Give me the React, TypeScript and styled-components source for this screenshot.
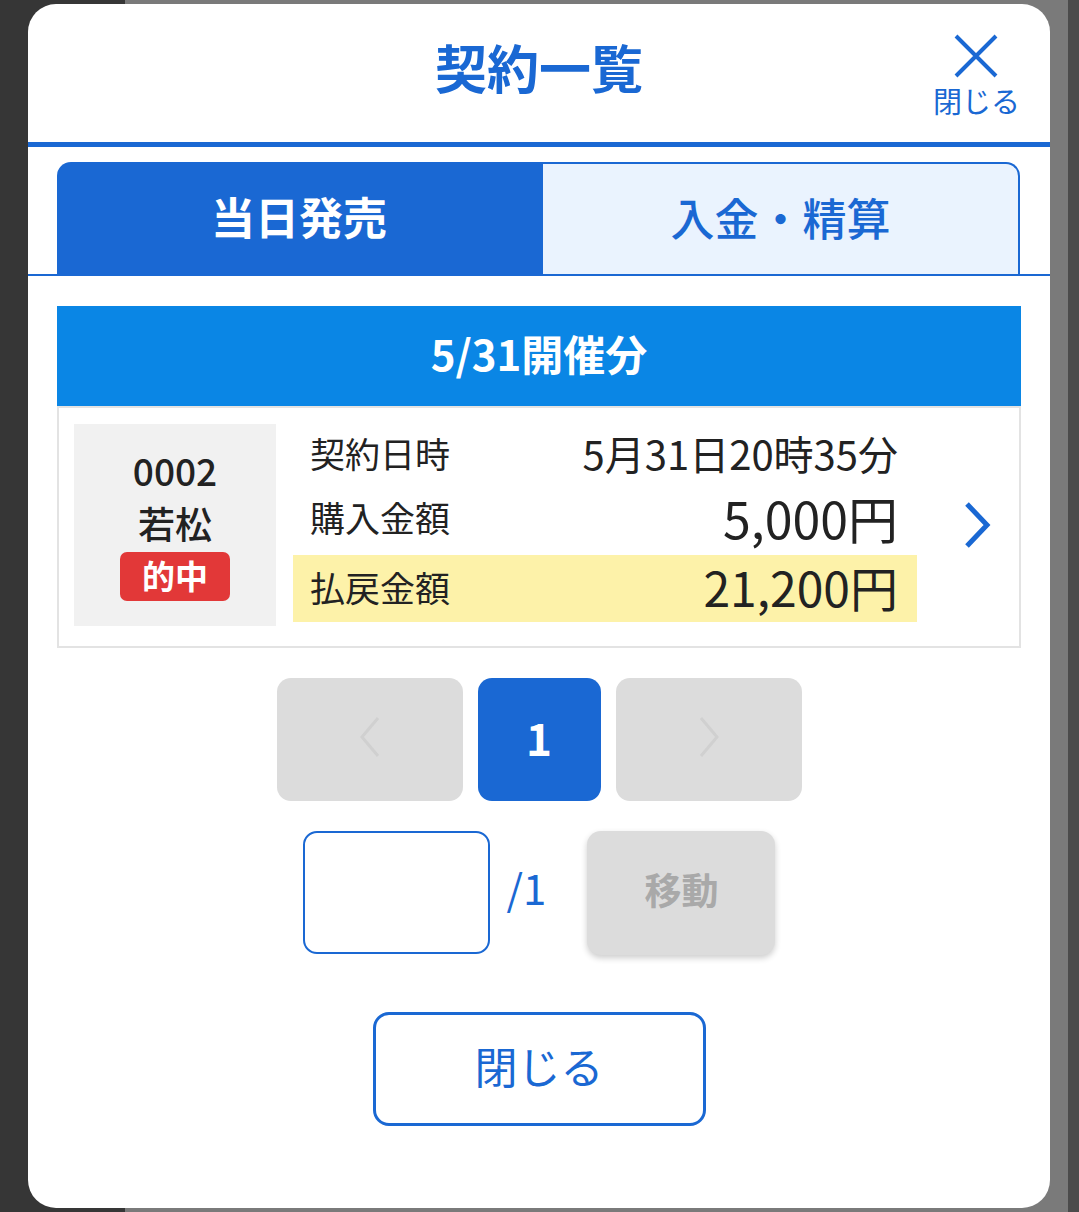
import styled, { createGlobalStyle } from 'styled-components';

const BLUE = '#1a68d3';

const GlobalStyle = createGlobalStyle`
  html, body {
    margin: 0;
    padding: 0;
  }
  body {
    font-family: "Noto Sans CJK JP", "Noto Sans", sans-serif;
    color: #222;
  }
  * {
    box-sizing: border-box;
  }
`;

const Overlay = styled.div`
  min-height: 1212px;
  display: flex;
  align-items: flex-start;
  padding: 4px 29px 4px 28px;
  background: linear-gradient(
    to right,
    #363636 0 125px,
    #7a7a7a 125px 1068px,
    #4b4b4b 1068px
  );
`;

const Modal = styled.div`
  width: 1022px;
  height: 1204px;
  background: #fff;
  border-radius: 28px;
  display: flex;
  flex-direction: column;
  overflow: hidden;
`;

const Header = styled.header`
  height: 143px;
  display: grid;
  grid-template-columns: 1fr auto 1fr;
  align-items: center;
  border-bottom: 5px solid ${BLUE};
`;

const Title = styled.h1`
  grid-column: 2;
  margin: 0 0 12px;
  font-size: 52px;
  font-weight: 700;
  color: ${BLUE};
  line-height: 1;
`;

const CloseIcon = styled.button`
  grid-column: 3;
  justify-self: end;
  align-self: start;
  margin: 29px 30px 0 0;
  padding: 0;
  border: none;
  background: none;
  display: flex;
  flex-direction: column;
  align-items: center;
  color: ${BLUE};
  font-family: inherit;
  font-size: 29px;
  line-height: 1;
  cursor: pointer;

  span {
    margin-top: 7px;
  }
`;

const TabBar = styled.div`
  display: grid;
  grid-template-columns: 484px 1fr;
  padding: 15px 30px 0 29px;
  border-bottom: 2px solid ${BLUE};
`;

const Tab = styled.button<{ $active?: boolean }>`
  height: 112px;
  display: flex;
  align-items: center;
  justify-content: center;
  font-family: inherit;
  font-size: 44px;
  line-height: 1;
  padding: 0 0 5px;
  cursor: pointer;
  background: ${({ $active }) => ($active ? BLUE : '#eaf3fe')};
  color: ${({ $active }) => ($active ? '#fff' : BLUE)};
  font-weight: ${({ $active }) => ($active ? 700 : 500)};
  border: ${({ $active }) => ($active ? 'none' : `2px solid ${BLUE}`)};
  border-bottom: none;
  border-radius: ${({ $active }) => ($active ? '14px 0 0 0' : '0 14px 0 0')};
`;

const Body = styled.div`
  padding: 30px 29px 0;
  display: flex;
  flex-direction: column;
  align-items: center;
`;

const DateBar = styled.div`
  width: 100%;
  height: 100px;
  padding-bottom: 6px;
  background: #0a86e5;
  color: #fff;
  font-size: 42px;
  font-weight: 700;
  display: flex;
  align-items: center;
  justify-content: center;
  line-height: 1;
`;

const Card = styled.div`
  width: 100%;
  height: 242px;
  border: 2px solid #e3e3e3;
  padding: 16px 0 20px 15px;
  display: flex;
`;

const RaceBox = styled.div`
  width: 202px;
  height: 202px;
  padding-bottom: 4px;
  background: #f1f1f1;
  display: flex;
  flex-direction: column;
  align-items: center;
  justify-content: center;
`;

const RaceNo = styled.div`
  font-size: 37px;
  font-weight: 500;
  line-height: 50px;
`;

const Venue = styled.div`
  font-size: 37px;
  font-weight: 500;
  line-height: 57px;
`;

const HitBadge = styled.div`
  width: 110px;
  height: 49px;
  border-radius: 7px;
  background: #e23838;
  color: #fff;
  font-size: 33px;
  font-weight: 700;
  line-height: 46px;
  text-align: center;
`;

const Info = styled.div`
  width: 624px;
  margin-left: 17px;
  display: flex;
  flex-direction: column;
`;

const InfoRow = styled.div<{ $h: number; $highlight?: boolean }>`
  height: ${({ $h }) => $h}px;
  margin-top: ${({ $highlight }) => ($highlight ? '3px' : '0')};
  background: ${({ $highlight }) => ($highlight ? '#fdf2a9' : 'transparent')};
  padding: 0 19px 5px 17px;
  display: flex;
  align-items: center;
  justify-content: space-between;
`;

const Label = styled.span`
  font-size: 35px;
  line-height: 1;
`;

const Value = styled.span<{ $size: number }>`
  font-size: ${({ $size }) => $size}px;
  line-height: 1;
`;

const ChevronCell = styled.div`
  padding-left: 45px;
  display: flex;
  align-items: center;
`;

const Pager = styled.div`
  margin-top: 30px;
  display: flex;
  gap: 15px;
`;

const PageButton = styled.button<{ $active?: boolean; $w: number }>`
  width: ${({ $w }) => $w}px;
  height: 123px;
  border: none;
  border-radius: 14px;
  padding: 0 0 6px;
  display: flex;
  align-items: center;
  justify-content: center;
  background: ${({ $active }) => ($active ? BLUE : '#dcdcdc')};
  color: #fff;
  font-family: inherit;
  font-size: 44px;
  font-weight: 700;
  line-height: 1;
`;

const JumpRow = styled.div`
  margin-top: 30px;
  display: flex;
  align-items: flex-start;
`;

const PageInput = styled.input`
  width: 187px;
  height: 123px;
  border: 2.5px solid ${BLUE};
  border-radius: 14px;
  background: #fff;
  font-family: inherit;
  font-size: 40px;
  text-align: center;
  outline: none;
`;

const Total = styled.span`
  align-self: center;
  margin: 0 41px 12px 17px;
  color: ${BLUE};
  font-size: 42px;
  line-height: 1;
`;

const JumpButton = styled.button`
  width: 188px;
  height: 124px;
  border: none;
  border-radius: 14px;
  padding: 0 0 8px;
  background: #dcdcdc;
  box-shadow: 0 3px 6px rgba(0, 0, 0, 0.2);
  color: #a9a9a9;
  font-family: inherit;
  font-size: 37px;
  font-weight: 700;
  line-height: 1;
`;

const CloseButton = styled.button`
  margin-top: 57px;
  width: 333px;
  height: 114px;
  border: 3px solid ${BLUE};
  border-radius: 16px;
  padding: 0 0 7px;
  background: #fff;
  color: ${BLUE};
  font-family: inherit;
  font-size: 43px;
  line-height: 1;
  cursor: pointer;
`;

const Chevron = ({ dir, color, w, h, stroke }: { dir: 'left' | 'right'; color: string; w: number; h: number; stroke: number }) => {
  const pad = stroke;
  const pts =
    dir === 'right'
      ? `${pad},${pad} ${w - pad},${h / 2} ${pad},${h - pad}`
      : `${w - pad},${pad} ${pad},${h / 2} ${w - pad},${h - pad}`;
  return (
    <svg width={w} height={h} viewBox={`0 0 ${w} ${h}`} fill="none">
      <polyline points={pts} stroke={color} strokeWidth={stroke} strokeLinecap="butt" strokeLinejoin="miter" />
    </svg>
  );
};

export default function App() {
  return (
    <>
      <GlobalStyle />
      <Overlay>
        <Modal>
          <Header>
            <Title>契約一覧</Title>
            <CloseIcon>
              <svg width="46" height="46" viewBox="0 0 46 46" fill="none">
                <path d="M3 3L43 43M43 3L3 43" stroke={BLUE} strokeWidth="4" />
              </svg>
              <span>閉じる</span>
            </CloseIcon>
          </Header>

          <TabBar>
            <Tab $active>当日発売</Tab>
            <Tab>入金・精算</Tab>
          </TabBar>

          <Body>
            <DateBar>5/31開催分</DateBar>
            <Card>
              <RaceBox>
                <RaceNo>0002</RaceNo>
                <Venue>若松</Venue>
                <HitBadge>的中</HitBadge>
              </RaceBox>
              <Info>
                <InfoRow $h={62}>
                  <Label>契約日時</Label>
                  <Value $size={40}>5月31日20時35分</Value>
                </InfoRow>
                <InfoRow $h={66}>
                  <Label>購入金額</Label>
                  <Value $size={50}>5,000円</Value>
                </InfoRow>
                <InfoRow $h={67} $highlight>
                  <Label>払戻金額</Label>
                  <Value $size={48}>21,200円</Value>
                </InfoRow>
              </Info>
              <ChevronCell>
                <Chevron dir="right" color={BLUE} w={30} h={52} stroke={5} />
              </ChevronCell>
            </Card>

            <Pager>
              <PageButton $w={186}>
                <Chevron dir="left" color="#d0d0d0" w={22} h={44} stroke={3} />
              </PageButton>
              <PageButton $w={123} $active>1</PageButton>
              <PageButton $w={186}>
                <Chevron dir="right" color="#d0d0d0" w={22} h={44} stroke={3} />
              </PageButton>
            </Pager>

            <JumpRow>
              <PageInput type="text" />
              <Total>/1</Total>
              <JumpButton>移動</JumpButton>
            </JumpRow>

            <CloseButton>閉じる</CloseButton>
          </Body>
        </Modal>
      </Overlay>
    </>
  );
}
